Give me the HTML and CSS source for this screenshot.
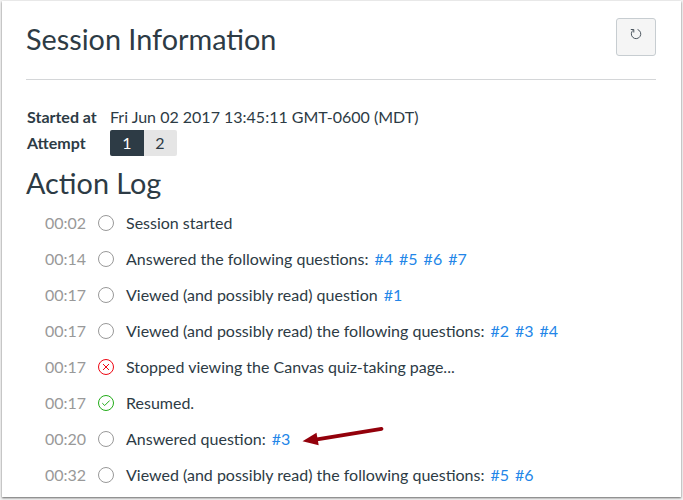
FILE: index.html
```html
<!DOCTYPE html>
<html lang="en">
<head>
<meta charset="utf-8">
<title>Session Information</title>
<link rel="stylesheet" href="styles.css">
</head>
<body>
<main class="panel">
  <header class="header">
    <h1 class="title">Session Information</h1>
    <button class="refresh" aria-label="Refresh">
      <svg width="12" height="12" viewBox="0 0 12 12" fill="none" stroke="#4c565f" stroke-width="1"><path d="M7.6 1.5A4.7 4.7 0 1 1 3.2 2.2M.8 1.5h3v3"/></svg>
    </button>
  </header>
  <dl class="details">
    <dt>Started at</dt><dd>Fri Jun 02 2017 13:45:11 GMT-0600 (MDT)</dd>
    <dt>Attempt</dt><dd class="attempts"><span class="attempt current">1</span><span class="attempt">2</span></dd>
  </dl>
  <h2 class="subtitle">Action Log</h2>
  <ul class="log">
    <li class="entry"><time>00:02</time><svg class="mark" viewBox="0 0 18 18"><circle cx="9" cy="9" r="7.5"/></svg><span>Session started</span></li>
    <li class="entry"><time>00:14</time><svg class="mark" viewBox="0 0 18 18"><circle cx="9" cy="9" r="7.5"/></svg><span>Answered the following questions:</span><a>#4</a><a>#5</a><a>#6</a><a>#7</a></li>
    <li class="entry"><time>00:17</time><svg class="mark" viewBox="0 0 18 18"><circle cx="9" cy="9" r="7.5"/></svg><span>Viewed (and possibly read) question</span><a>#1</a></li>
    <li class="entry"><time>00:17</time><svg class="mark" viewBox="0 0 18 18"><circle cx="9" cy="9" r="7.5"/></svg><span>Viewed (and possibly read) the following questions:</span><a>#2</a><a>#3</a><a>#4</a></li>
    <li class="entry"><time>00:17</time><svg class="mark stopped" viewBox="0 0 18 18"><circle cx="9" cy="9" r="7.5"/><path d="M6 6l6 6M12 6l-6 6"/></svg><span>Stopped viewing the Canvas quiz-taking page...</span></li>
    <li class="entry"><time>00:17</time><svg class="mark resumed" viewBox="0 0 18 18"><circle cx="9" cy="9" r="7.5"/><path d="M5.3 9.2l2.4 2.3 5-5"/></svg><span>Resumed.</span></li>
    <li class="entry"><time>00:20</time><svg class="mark" viewBox="0 0 18 18"><circle cx="9" cy="9" r="7.5"/></svg><span>Answered question:</span><a>#3</a></li>
    <li class="entry"><time>00:32</time><svg class="mark" viewBox="0 0 18 18"><circle cx="9" cy="9" r="7.5"/></svg><span>Viewed (and possibly read) the following questions:</span><a>#5</a><a>#6</a></li>
  </ul>
  <svg class="arrow" width="84" height="22" viewBox="0 0 84 22"><path d="M15 13.4L79.5 2.8" stroke="#93000b" stroke-width="3.8" stroke-linecap="round"/><path d="M.5 15.2L14.5 6.8 16.7 19.3z" fill="#93000b"/></svg>
</main>
</body>
</html>
```
FILE: styles.css
```css
* { box-sizing: border-box; }
body {
  margin: 0;
  height: 500px;
  overflow: hidden;
  padding: 1px 2px 3px;
  background: #f3f3f3;
  font: 16px/24px Lato, Carlito, sans-serif;
  color: #2d3b45;
}
.panel {
  position: relative;
  height: 496px;
  padding: 0 25px 0 24px;
  background: #fff;
  box-shadow: 0 1px 2px #666;
}
.header {
  display: flex;
  justify-content: space-between;
  align-items: flex-start;
  height: 79px;
  padding-top: 17px;
  border-bottom: 1px solid #d4d6d8;
}
.title, .subtitle { margin: 0; font-size: 28.8px; font-weight: 400; line-height: 42px; }
.refresh {
  display: flex;
  justify-content: center;
  width: 40px;
  height: 38px;
  padding: 9px 0 0;
  border: 1px solid #c7cdd1;
  border-radius: 3px;
  background: #f5f5f5;
}
.details {
  display: grid;
  grid-template-columns: 83px 1fr;
  grid-template-rows: 25px 26px;
  margin: 25px 0 0 1px;
}
.details dt { font-weight: 700; }
.details dd { margin: 0; }
.details dt:last-of-type { line-height: 26px; }
.attempts { display: flex; }
.attempt {
  width: 33px;
  height: 26px;
  padding-right: 1px;
  line-height: 26px;
  text-align: center;
  background: #e5e5e5;
  border-radius: 0 2px 2px 0;
}
.current { width: 34px; background: #2d3b45; color: #fff; border-radius: 2px 0 0 2px; padding: 0; }
.subtitle { margin-top: 6px; }
.log { margin: 1px 0 0; padding: 0 0 0 19px; list-style: none; }
.entry { display: flex; align-items: center; height: 36px; white-space: nowrap; }
.entry time { width: 52px; color: #999; }
.entry a { margin-left: 6px; color: #2386e8; }
.mark { width: 18px; height: 18px; margin-right: 11px; fill: none; stroke: #999; stroke-width: 1; }
.stopped { stroke: #ee0612; }
.resumed { stroke: #22ac18; }
.arrow { position: absolute; left: 300px; top: 425px; }
```
